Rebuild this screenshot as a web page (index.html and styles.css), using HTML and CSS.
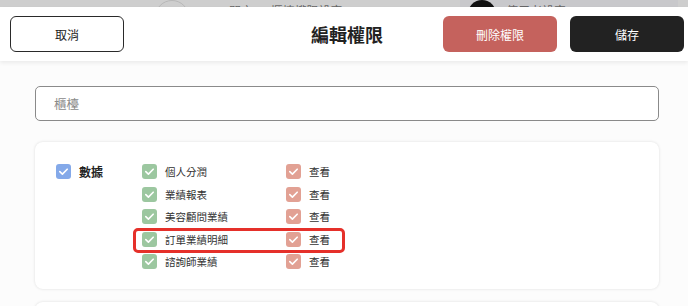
FILE: index.html
```html
<!DOCTYPE html>
<html>
<head>
  <meta charset="utf-8">
  <meta name="viewport" content="width=device-width, initial-scale=1">
  <title>編輯權限</title>
  <link rel="stylesheet" href="styles.css">
</head>
<body>
  <!-- page behind the sheet, only its bottom edge shows -->
  <div class="backdrop">
    <span class="avatar-ring"></span>
    <span class="backdrop-text">門市 　 櫃檯權限設定</span>
    <span class="user-pill">
      <span class="avatar-dark"></span>
      <span class="backdrop-text">使用者設定</span>
    </span>
  </div>

  <div class="sheet">
    <header class="sheet-head">
      <div class="head-left">
        <button type="button" class="btn btn-cancel">取消</button>
      </div>
      <h2 class="sheet-title">編輯權限</h2>
      <div class="head-right">
        <button type="button" class="btn btn-delete">刪除權限</button>
        <button type="button" class="btn btn-save">儲存</button>
      </div>
    </header>

    <main class="sheet-body">
      <input type="text" class="name-input" placeholder="櫃檯">

      <section class="perm-card">
        <div class="perm-group">
          <span class="check check-blue">
            <svg viewBox="0 0 15 15"><polyline points="3.8,7.6 6.4,10.1 11.2,5.2"/></svg>
          </span>
          <span class="group-name">數據</span>
        </div>
        <div class="perm-list">
          <div class="perm-row">
            <span class="check check-green"><svg viewBox="0 0 15 15"><polyline points="3.8,7.6 6.4,10.1 11.2,5.2"/></svg></span>
            <span class="perm-name">個人分潤</span>
            <span class="check check-salmon"><svg viewBox="0 0 15 15"><polyline points="3.8,7.6 6.4,10.1 11.2,5.2"/></svg></span>
            <span class="perm-name">查看</span>
          </div>
          <div class="perm-row">
            <span class="check check-green"><svg viewBox="0 0 15 15"><polyline points="3.8,7.6 6.4,10.1 11.2,5.2"/></svg></span>
            <span class="perm-name">業績報表</span>
            <span class="check check-salmon"><svg viewBox="0 0 15 15"><polyline points="3.8,7.6 6.4,10.1 11.2,5.2"/></svg></span>
            <span class="perm-name">查看</span>
          </div>
          <div class="perm-row">
            <span class="check check-green"><svg viewBox="0 0 15 15"><polyline points="3.8,7.6 6.4,10.1 11.2,5.2"/></svg></span>
            <span class="perm-name">美容顧問業績</span>
            <span class="check check-salmon"><svg viewBox="0 0 15 15"><polyline points="3.8,7.6 6.4,10.1 11.2,5.2"/></svg></span>
            <span class="perm-name">查看</span>
          </div>
          <div class="perm-row marked">
            <span class="check check-green"><svg viewBox="0 0 15 15"><polyline points="3.8,7.6 6.4,10.1 11.2,5.2"/></svg></span>
            <span class="perm-name">訂單業績明細</span>
            <span class="check check-salmon"><svg viewBox="0 0 15 15"><polyline points="3.8,7.6 6.4,10.1 11.2,5.2"/></svg></span>
            <span class="perm-name">查看</span>
          </div>
          <div class="perm-row">
            <span class="check check-green"><svg viewBox="0 0 15 15"><polyline points="3.8,7.6 6.4,10.1 11.2,5.2"/></svg></span>
            <span class="perm-name">諮詢師業績</span>
            <span class="check check-salmon"><svg viewBox="0 0 15 15"><polyline points="3.8,7.6 6.4,10.1 11.2,5.2"/></svg></span>
            <span class="perm-name">查看</span>
          </div>
        </div>
      </section>

      <section class="perm-card"></section>
    </main>
  </div>
</body>
</html>
```

FILE: styles.css
```css
html, body {
  margin: 0;
  height: 100%;
  overflow: hidden;
}
body {
  font-family: "Noto Sans CJK TC", "Noto Sans", sans-serif;
  color: #222;
  background: #cfcfcf;
}
button {
  font-family: inherit;
  cursor: pointer;
}

/* backdrop strip */
.backdrop {
  height: 7px;
  overflow: hidden;
  display: flex;
  align-items: flex-start;
  background: #cecece;
}
.avatar-ring {
  width: 34px;
  height: 34px;
  margin: 0 0 0 155px;
  border-radius: 50%;
  border: 1px solid #b8b8b8;
  box-sizing: border-box;
  flex: none;
}
.backdrop-text {
  font-size: 12px;
  line-height: 12px;
  margin-top: 5px;
  color: #666;
  white-space: nowrap;
}
.avatar-ring + .backdrop-text {
  margin-left: 40px;
}
.user-pill {
  display: flex;
  align-items: flex-start;
  gap: 10px;
  margin-left: auto;
  width: 210px;
  margin-right: 10px;
  height: 7px;
  background: #c8c8cb;
  padding-left: 8px;
}
.avatar-dark {
  width: 28px;
  height: 28px;
  border-radius: 50%;
  background: #111;
  flex: none;
}

/* sheet */
.sheet {
  background: #fcfcfc;
  height: 100%;
}
.sheet-head {
  display: grid;
  grid-template-columns: 1fr auto 1fr;
  align-items: center;
  height: 54px;
  padding: 0 4px 0 10px;
  background: #fff;
  box-shadow: 0 2px 4px rgba(0, 0, 0, 0.07);
  position: relative;
}
.head-right {
  display: flex;
  justify-content: flex-end;
  gap: 13px;
}
.sheet-title {
  margin: 0;
  font-size: 18px;
  font-weight: 700;
  color: #222;
}
.btn {
  width: 114px;
  height: 36px;
  border-radius: 6px;
  font-size: 12px;
  border: none;
  padding: 0;
}
.btn-cancel {
  background: #fff;
  border: 1px solid #2a2a2a;
  color: #222;
}
.btn-delete {
  background: #c5625d;
  color: #fff;
}
.btn-save {
  background: #222;
  color: #fff;
}

.sheet-body {
  padding: 25px 29px 0 35px;
  display: flex;
  flex-direction: column;
}
.name-input {
  height: 35px;
  box-sizing: border-box;
  border: 1px solid #8a8a8a;
  border-radius: 5px;
  padding: 0 18px;
  font-family: inherit;
  font-size: 12.5px;
  background: #fff;
  margin: 0 0 21px;
}
.name-input::placeholder {
  color: #8a8a8a;
}

.perm-card {
  display: flex;
  background: #fff;
  border-radius: 8px;
  box-shadow: 0 0 3px rgba(0, 0, 0, 0.13);
  padding: 22px 21px 20px;
  margin-bottom: 13px;
  min-height: 20px;
}
.perm-group {
  display: flex;
  align-items: center;
  gap: 8px;
  width: 86px;
  height: 15px;
  align-self: flex-start;
}
.group-name {
  font-size: 12px;
  font-weight: 700;
  line-height: 15px;
}
.perm-list {
  display: flex;
  flex-direction: column;
  gap: 7.5px;
}
.perm-row {
  display: grid;
  grid-template-columns: 15px 113px 15px auto;
  column-gap: 8px;
  align-items: center;
  height: 15px;
  position: relative;
}
.perm-name {
  font-size: 10.5px;
  line-height: 15px;
  color: #333;
}
.perm-row.marked::after {
  content: "";
  position: absolute;
  left: -9px;
  top: -4px;
  width: 212px;
  height: 25px;
  box-sizing: border-box;
  border: 3px solid #e5302a;
  border-radius: 5px;
}

.check {
  width: 15px;
  height: 15px;
  border-radius: 3px;
  display: block;
}
.check svg {
  display: block;
  width: 15px;
  height: 15px;
  fill: none;
  stroke: #fff;
  stroke-width: 1.6;
  stroke-linecap: round;
  stroke-linejoin: round;
}
.check-blue {
  background: #84a9e9;
}
.check-green {
  background: #9cc7a0;
}
.check-salmon {
  background: #e2a194;
}
```
